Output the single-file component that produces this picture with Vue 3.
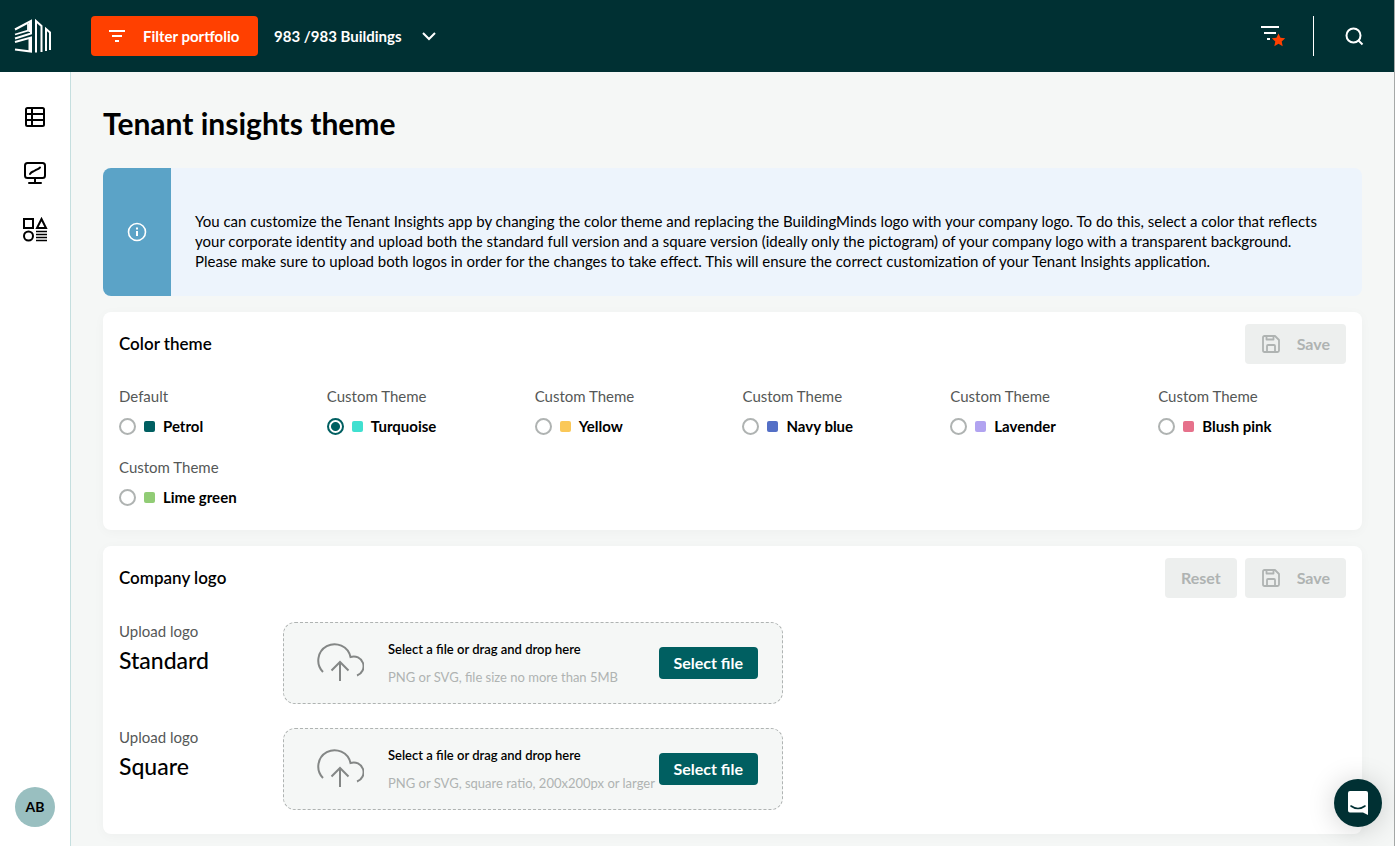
<script setup>
import { ref } from 'vue'

const themes = [
  { group: 'Default', name: 'Petrol', color: 'petrol' },
  { group: 'Custom Theme', name: 'Turquoise', color: 'turquoise' },
  { group: 'Custom Theme', name: 'Yellow', color: 'yellow' },
  { group: 'Custom Theme', name: 'Navy blue', color: 'navy' },
  { group: 'Custom Theme', name: 'Lavender', color: 'lavender' },
  { group: 'Custom Theme', name: 'Blush pink', color: 'pink' },
  { group: 'Custom Theme', name: 'Lime green', color: 'lime' }
]
const selected = ref('Turquoise')

const uploads = [
  { name: 'Standard', hint: 'PNG or SVG, file size no more than 5MB' },
  { name: 'Square', hint: 'PNG or SVG, square ratio, 200x200px or larger' }
]
</script>

<template>
  <div class="app">
    <header class="topbar">
      <a class="brand" href="#" aria-label="Home">
        <svg width="38" height="36" viewBox="0 0 38 36" fill="none" stroke="#fff" stroke-width="2">
          <path d="M1 11.500L17 3v12.500L1 20.500" />
          <path d="M1 16.500L14 12.500V6" stroke-width="1.800" />
          <path d="M1 24L17 19.500V33.500L1 31.500" />
          <path d="M15.500 5v9M15.500 21v12" stroke-width="2" />
          <path d="M22 34.500V3L27.500 8V34" />
          <path d="M32 33V11L36 14.500V32" />
        </svg>
      </a>
      <button class="filter" type="button">
        <svg width="20" height="20" viewBox="0 0 20 20" fill="none" stroke="#fff" stroke-width="2">
          <path d="M2 5h16M5 10h10M8 15h4" />
        </svg>
        <span>Filter portfolio</span>
      </button>
      <button class="scope" type="button">
        <span>983 /983 Buildings</span>
        <svg width="14" height="10" viewBox="0 0 14 10" fill="none" stroke="#fff" stroke-width="2">
          <path d="M1 2l6 6 6-6" />
        </svg>
      </button>
      <div class="tools">
        <button class="tool" type="button" aria-label="Saved filters">
          <svg width="26" height="24" viewBox="0 0 26 24">
            <path d="M1 3h18M4 9h12M7 15h3" fill="none" stroke="#fff" stroke-width="2" />
            <path d="M18.500 9.500l2 4.300 4.700.5-3.500 3.200 1 4.700-4.200-2.400-4.200 2.400 1-4.700-3.500-3.200 4.700-.5z" fill="#ff4000" />
          </svg>
        </button>
        <span class="divider"></span>
        <button class="tool" type="button" aria-label="Search">
          <svg width="20" height="20" viewBox="0 0 20 20" fill="none" stroke="#fff" stroke-width="2">
            <circle cx="9.500" cy="9.500" r="7" />
            <path d="M14 14l4.500 4.500" />
          </svg>
        </button>
      </div>
    </header>

    <div class="body">
      <nav class="sidebar">
        <a href="#" aria-label="Table">
          <svg width="24" height="24" viewBox="0 0 24 24" fill="none" stroke="#000" stroke-width="2">
            <rect x="3" y="3" width="18" height="18" rx="1.500" />
            <path d="M3 9h18M3 15h18M9 3v18" />
          </svg>
        </a>
        <a href="#" aria-label="Dashboard">
          <svg width="24" height="24" viewBox="0 0 24 24" fill="none" stroke="#000" stroke-width="2" stroke-linecap="round">
            <rect x="2" y="2" width="20" height="15" rx="2.500" />
            <path d="M12 17v4M6 22h12" />
            <path d="M7 13c2-3 3-2 5-3.500s3-1 5-3" />
          </svg>
        </a>
        <a href="#" aria-label="Elements">
          <svg width="26" height="26" viewBox="0 0 26 26" fill="none" stroke="#000" stroke-width="2">
            <rect x="2" y="2" width="9" height="9" />
            <path d="M19.500 2L24 11h-9z" />
            <circle cx="6.500" cy="19" r="4.500" />
            <path d="M14 14.500h11M14 17.500h11M14 20.500h11M14 23.500h11" stroke-width="1.600" />
          </svg>
        </a>
        <button class="avatar" type="button">AB</button>
      </nav>

      <main class="content">
        <h1>Tenant insights theme</h1>

        <section class="notice">
          <div class="notice-mark">
            <svg width="20" height="20" viewBox="0 0 20 20" fill="none" stroke="#fff">
              <circle cx="10" cy="10" r="8.500" stroke-width="1.600" />
              <path d="M10 9v5M10 5.500v2" stroke-width="2" />
            </svg>
          </div>
          <p>
            You can customize the Tenant Insights app by changing the color theme and replacing the BuildingMinds logo with your company logo. To do this, select a color that reflects<br>
            your corporate identity and upload both the standard full version and a square version (ideally only the pictogram) of your company logo with a transparent background.<br>
            Please make sure to upload both logos in order for the changes to take effect. This will ensure the correct customization of your Tenant Insights application.
          </p>
        </section>

        <section class="card">
          <div class="card-head">
            <h2>Color theme</h2>
            <button class="ghost" type="button" disabled>
              <svg width="20" height="20" viewBox="0 0 20 20" fill="none" stroke="#afb3b2" stroke-width="1.800" stroke-linejoin="round">
                <path d="M2 3.500Q2 2 3.500 2h10.500L18 6v10.500Q18 18 16.500 18h-13Q2 18 2 16.500z" />
                <path d="M6 18v-6q0-1 1-1h6q1 0 1 1v6M5.500 2v3.500h7V2" />
              </svg>
              <span>Save</span>
            </button>
          </div>
          <div class="themes">
            <div v-for="theme in themes" :key="theme.name" class="theme">
              <span class="muted">{{ theme.group }}</span>
              <label>
                <input v-model="selected" type="radio" name="theme" :value="theme.name">
                <span class="swatch" :class="theme.color"></span>
                <span>{{ theme.name }}</span>
              </label>
            </div>
          </div>
        </section>

        <section class="card">
          <div class="card-head">
            <h2>Company logo</h2>
            <button class="ghost" type="button" disabled>Reset</button>
            <button class="ghost" type="button" disabled>
              <svg width="20" height="20" viewBox="0 0 20 20" fill="none" stroke="#afb3b2" stroke-width="1.800" stroke-linejoin="round">
                <path d="M2 3.500Q2 2 3.500 2h10.500L18 6v10.500Q18 18 16.500 18h-13Q2 18 2 16.500z" />
                <path d="M6 18v-6q0-1 1-1h6q1 0 1 1v6M5.500 2v3.500h7V2" />
              </svg>
              <span>Save</span>
            </button>
          </div>
          <div class="uploads">
            <div v-for="item in uploads" :key="item.name" class="upload">
              <div class="upload-title">
                <span class="muted">Upload logo</span>
                <h3>{{ item.name }}</h3>
              </div>
              <div class="dropzone">
                <svg width="48" height="42" viewBox="0 0 48 42" fill="none" stroke="#848786" stroke-width="2">
                  <path d="M7 30A16.300 16.300 0 1 1 34.500 15A9.800 9.800 0 0 1 41 33.500" />
                  <path d="M24 39V20M15.500 28.500L24 20l8.500 8.500" />
                </svg>
                <div class="drop-text">
                  <strong>Select a file or drag and drop here</strong>
                  <span>{{ item.hint }}</span>
                </div>
                <button class="select" type="button">Select file</button>
              </div>
            </div>
          </div>
        </section>
      </main>
    </div>

    <button class="chat" type="button" aria-label="Open chat">
      <svg width="24" height="26" viewBox="0 0 24 26">
        <path d="M4 1h16q2 0 2 2v22l-5-2.500H4q-2 0-2-2V3q0-2 2-2z" fill="#fff" />
        <path d="M5 16q7 5 14 0" fill="none" stroke="#003033" stroke-width="1.600" stroke-linecap="round" />
      </svg>
    </button>
  </div>
</template>

<style>
body {
  background: #f5f7f6;
}
</style>

<style scoped>
* {
  box-sizing: border-box;
}
.app {
  display: flex;
  flex-direction: column;
  min-height: 100vh;
  border-right: 1px solid #a5a8a7;
  background: #f5f7f6;
  color: #000;
  font: 15px/20px Lato, "Liberation Sans", sans-serif;
}
button {
  font: inherit;
  border: 0;
  padding: 0;
  background: none;
  color: inherit;
}
svg {
  display: block;
  flex: none;
}
h1, h2, h3, p {
  margin: 0;
}
.topbar {
  display: flex;
  align-items: center;
  height: 72px;
  background: #003033;
  color: #fff;
  font-weight: 700;
}
.brand {
  width: 91px;
  padding-left: 14px;
}
.filter {
  display: flex;
  align-items: center;
  gap: 16px;
  min-width: 167px;
  height: 40px;
  padding: 0 16px;
  border-radius: 4px;
  background: #ff4000;
  font-weight: 700;
}
.scope {
  display: flex;
  align-items: center;
  gap: 20px;
  margin-left: 16px;
  font-weight: 700;
}
.tools {
  display: flex;
  align-items: center;
  margin-left: auto;
  padding-right: 30px;
}
.divider {
  width: 1px;
  height: 40px;
  margin: 0 30px 0 27px;
  background: #fff;
}
.body {
  display: flex;
  flex: 1;
}
.sidebar {
  display: flex;
  flex-direction: column;
  align-items: center;
  flex: none;
  gap: 32px;
  width: 71px;
  padding: 33px 0 19px;
  border-right: 1px solid #c5dfdf;
  background: #fff;
}
.avatar {
  width: 40px;
  height: 40px;
  margin-top: auto;
  border-radius: 50%;
  background: #99bfc0;
  font-size: 14px;
  font-weight: 700;
}
.content {
  display: flex;
  flex-direction: column;
  flex: 1;
  gap: 16px;
  min-width: 0;
  padding: 31px 32px 12px;
}
h1 {
  margin-bottom: 9px;
  font-size: 30px;
  line-height: 40px;
  font-weight: 700;
}
.notice {
  display: flex;
  overflow: hidden;
  border-radius: 8px;
  background: #edf4fc;
}
.notice-mark {
  display: flex;
  align-items: center;
  justify-content: center;
  flex: none;
  width: 68px;
  background: #5ba3c7;
}
.notice p {
  padding: 43px 24px 25px;
}
.card {
  padding: 12px 16px 0;
  border-radius: 8px;
  background: #fff;
  box-shadow: 0 2px 12px rgba(0, 0, 0, 0.03);
}
.card-head {
  display: flex;
  align-items: center;
  gap: 8px;
}
h2 {
  margin-right: auto;
  font-size: 17px;
  line-height: 24px;
  font-weight: 600;
}
.ghost {
  display: flex;
  align-items: center;
  gap: 16px;
  height: 40px;
  padding: 0 16px;
  border-radius: 4px;
  background: #edefee;
  color: #afb3b2;
  font-size: 16px;
  font-weight: 700;
}
.muted {
  color: #555857;
}
.themes {
  display: grid;
  grid-template-columns: repeat(6, 1fr);
  gap: 21px 20px;
  padding: 22px 0 23px;
}
.theme {
  display: flex;
  flex-direction: column;
  gap: 10px;
}
.theme label {
  display: flex;
  align-items: center;
  height: 20px;
  font-weight: 700;
}
.theme input {
  appearance: none;
  width: 17px;
  height: 17px;
  margin: 0 8px 0 0;
  border: 2px solid #afb3b2;
  border-radius: 50%;
}
.theme input:checked {
  border-color: #005f61;
  background: radial-gradient(circle, #005f61 4px, #fff 5px);
}
.swatch {
  width: 11px;
  height: 11px;
  margin-right: 8px;
  border-radius: 2px;
}
.petrol { background: #005f61; }
.turquoise { background: #40e0d0; }
.yellow { background: #fac858; }
.navy { background: #546fc6; }
.lavender { background: #b1a3f0; }
.pink { background: #e6718b; }
.lime { background: #91cc75; }
.uploads {
  display: flex;
  flex-direction: column;
  gap: 24px;
  padding: 24px 0;
}
.upload {
  display: flex;
}
.upload-title {
  display: flex;
  flex-direction: column;
  gap: 6px;
  width: 164px;
  line-height: 18px;
}
h3 {
  font-size: 23px;
  line-height: 28px;
  font-weight: 500;
}
.dropzone {
  display: flex;
  align-items: center;
  width: 500px;
  height: 82px;
  padding: 0 24px 0 32px;
  border: 1px dashed #afb3b2;
  border-radius: 12px;
  background: #f5f7f6;
}
.drop-text {
  display: flex;
  flex-direction: column;
  gap: 8px;
  margin-left: 24px;
  color: #afb3b2;
  font-size: 13px;
  white-space: nowrap;
}
.drop-text strong {
  color: #000;
  font-weight: 600;
}
.select {
  flex: none;
  height: 32px;
  margin-left: auto;
  padding: 0 15px;
  border-radius: 4px;
  background: #005f61;
  color: #fff;
  font-size: 16px;
  font-weight: 700;
}
.chat {
  position: fixed;
  right: 13px;
  bottom: 19px;
  display: flex;
  align-items: center;
  justify-content: center;
  width: 48px;
  height: 48px;
  border-radius: 50%;
  background: #003033;
  box-shadow: 0 2px 28px rgba(0, 0, 0, 0.18);
}
</style>
